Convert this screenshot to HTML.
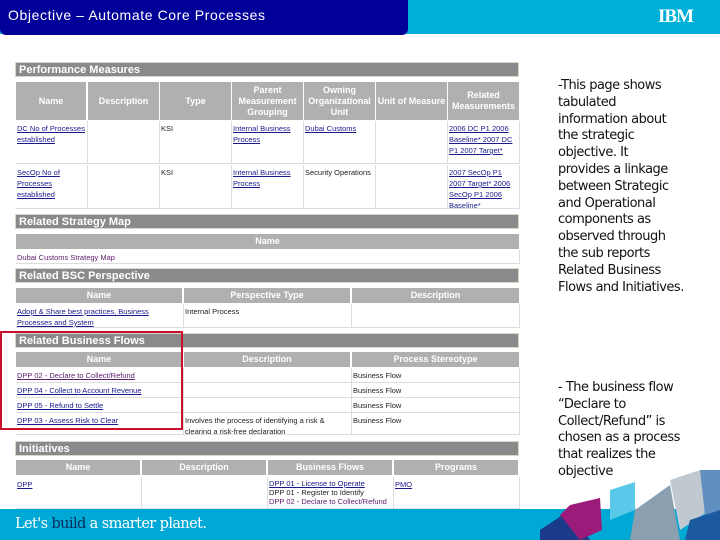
<!DOCTYPE html>
<html><head><meta charset="utf-8"><style>
*{margin:0;padding:0;box-sizing:border-box}
body{width:720px;height:540px;position:relative;overflow:hidden;background:#fff;font-family:"Liberation Sans",sans-serif}
.a{position:absolute}
.bar{position:absolute;left:15px;width:504px;height:15px;background:#8a8a8a;color:#fff;font-weight:bold;font-size:11px;line-height:15px;padding-left:3px;border:1px solid #d8d8c8}
.hd{position:absolute;background:#b0b0b0;color:#fff;font-weight:bold;font-size:9px;text-align:center;line-height:11px;display:flex;align-items:center;justify-content:center}
.c{position:absolute;font-size:7.5px;line-height:11px;color:#222;border-bottom:1px solid #ddd;border-right:1px solid #ddd;padding:2px 1px;overflow:hidden}
.l{color:#1a1a8c;text-decoration:underline}
.rt{position:absolute;left:558px;font-size:13px;line-height:16.8px;color:#111;font-family:"DejaVu Sans","Liberation Sans",sans-serif;letter-spacing:-0.5px}
</style></head><body>
<div class="a" style="left:0;top:0;width:720px;height:34px;background:#00b0d8"></div>
<div class="a" style="left:0;top:0;width:408px;height:35px;background:#000099;border-radius:0 0 6px 6px"></div>
<div class="a" style="left:8px;top:7px;color:#fff;font-size:14px;letter-spacing:0.6px">Objective – Automate Core Processes</div>
<div class="a" style="left:658px;top:6px;color:#fff;font-size:19px;font-weight:bold;letter-spacing:-1px;font-family:'Liberation Serif',serif">IBM</div>

<div class="bar" style="top:62px">Performance Measures</div>
<div class="hd" style="left:16px;top:82px;width:70px;height:38px">Name</div>
<div class="hd" style="left:88px;top:82px;width:71px;height:38px">Description</div>
<div class="hd" style="left:160px;top:82px;width:71px;height:38px">Type</div>
<div class="hd" style="left:232px;top:82px;width:71px;height:38px">Parent Measurement Grouping</div>
<div class="hd" style="left:304px;top:82px;width:71px;height:38px">Owning Organizational Unit</div>
<div class="hd" style="left:376px;top:82px;width:71px;height:38px">Unit of Measure</div>
<div class="hd" style="left:448px;top:82px;width:71px;height:38px">Related Measurements</div>
<div class="c" style="left:16px;top:121px;width:72px;height:43px"><span class="l">DC No of Processes established</span></div>
<div class="c" style="left:88px;top:121px;width:72px;height:43px"></div>
<div class="c" style="left:160px;top:121px;width:72px;height:43px">KSI</div>
<div class="c" style="left:232px;top:121px;width:72px;height:43px"><span class="l">Internal Business Process</span></div>
<div class="c" style="left:304px;top:121px;width:72px;height:43px"><span class="l">Dubai Customs</span></div>
<div class="c" style="left:376px;top:121px;width:72px;height:43px"></div>
<div class="c" style="left:448px;top:121px;width:72px;height:43px"><span class="l">2006 DC P1 2006 Baseline* 2007 DC P1 2007 Target*</span></div>
<div class="c" style="left:16px;top:165px;width:72px;height:44px"><span class="l">SecOp No of Processes established</span></div>
<div class="c" style="left:88px;top:165px;width:72px;height:44px"></div>
<div class="c" style="left:160px;top:165px;width:72px;height:44px">KSI</div>
<div class="c" style="left:232px;top:165px;width:72px;height:44px"><span class="l">Internal Business Process</span></div>
<div class="c" style="left:304px;top:165px;width:72px;height:44px">Security Operations</div>
<div class="c" style="left:376px;top:165px;width:72px;height:44px"></div>
<div class="c" style="left:448px;top:165px;width:72px;height:44px"><span class="l">2007 SecOp P1 2007 Target* 2006 SecOp P1 2006 Baseline*</span></div>

<div class="bar" style="top:214px">Related Strategy Map</div>
<div class="hd" style="left:16px;top:234px;width:503px;height:15px">Name</div>
<div class="c" style="left:16px;top:250px;width:504px;height:14px;color:#602070">Dubai Customs Strategy Map</div>

<div class="bar" style="top:268px">Related BSC Perspective</div>
<div class="hd" style="left:16px;top:288px;width:166px;height:15px">Name</div>
<div class="hd" style="left:184px;top:288px;width:166px;height:15px">Perspective Type</div>
<div class="hd" style="left:352px;top:288px;width:167px;height:15px">Description</div>
<div class="c" style="left:16px;top:304px;width:168px;height:24px"><span class="l">Adopt &amp; Share best practices, Business Processes and System</span></div>
<div class="c" style="left:184px;top:304px;width:168px;height:24px">Internal Process</div>
<div class="c" style="left:352px;top:304px;width:168px;height:24px"></div>

<div class="bar" style="top:333px">Related Business Flows</div>
<div class="hd" style="left:16px;top:352px;width:166px;height:15px">Name</div>
<div class="hd" style="left:184px;top:352px;width:166px;height:15px">Description</div>
<div class="hd" style="left:352px;top:352px;width:167px;height:15px">Process Stereotype</div>
<div class="c" style="left:16px;top:368px;width:168px;height:15px"><span class="l" style="color:#602070">DPP 02 - Declare to Collect/Refund</span></div>
<div class="c" style="left:184px;top:368px;width:168px;height:15px"></div>
<div class="c" style="left:352px;top:368px;width:168px;height:15px">Business Flow</div>
<div class="c" style="left:16px;top:383px;width:168px;height:15px"><span class="l">DPP 04 - Collect to Account Revenue</span></div>
<div class="c" style="left:184px;top:383px;width:168px;height:15px"></div>
<div class="c" style="left:352px;top:383px;width:168px;height:15px">Business Flow</div>
<div class="c" style="left:16px;top:398px;width:168px;height:15px"><span class="l">DPP 05 - Refund to Settle</span></div>
<div class="c" style="left:184px;top:398px;width:168px;height:15px"></div>
<div class="c" style="left:352px;top:398px;width:168px;height:15px">Business Flow</div>
<div class="c" style="left:16px;top:413px;width:168px;height:22px"><span class="l">DPP 03 - Assess Risk to Clear</span></div>
<div class="c" style="left:184px;top:413px;width:168px;height:22px">Involves the process of identifying a risk &amp; clearing a risk-free declaration</div>
<div class="c" style="left:352px;top:413px;width:168px;height:22px">Business Flow</div>
<div class="a" style="left:0;top:331px;width:183px;height:99px;border:2px solid #c8102e"></div>

<div class="bar" style="top:441px">Initiatives</div>
<div class="hd" style="left:16px;top:460px;width:124px;height:15px">Name</div>
<div class="hd" style="left:142px;top:460px;width:124px;height:15px">Description</div>
<div class="hd" style="left:268px;top:460px;width:124px;height:15px">Business Flows</div>
<div class="hd" style="left:394px;top:460px;width:124px;height:15px">Programs</div>
<div class="c" style="left:16px;top:477px;width:126px;height:32px"><span class="l">DPP</span></div>
<div class="c" style="left:142px;top:477px;width:126px;height:32px"></div>
<div class="c" style="left:268px;top:477px;width:126px;height:32px;line-height:9px"><span class="l">DPP 01 - License to Operate</span><br>DPP 01 - Register to Identify<br><span style="color:#602070">DPP 02 - Declare to Collect/Refund</span></div>
<div class="c" style="left:394px;top:477px;width:126px;height:32px"><span class="l">PMO</span></div>

<div class="rt" style="top:78px">-This page shows<br>tabulated<br>information about<br>the strategic<br>objective. It<br>provides a linkage<br>between Strategic<br>and Operational<br>components as<br>observed through<br>the sub reports<br>Related Business<br>Flows and Initiatives.</div>
<div class="rt" style="top:380px">- The business flow<br>“Declare to<br>Collect/Refund” is<br>chosen as a process<br>that realizes the<br>objective</div>

<div class="a" style="left:0;top:509px;width:720px;height:31px;background:#00a8d6"></div>
<svg class="a" style="left:540px;top:470px" width="180" height="70">
<polygon points="0,60 30,40 50,70 0,70" fill="#1a3a8a"/>
<polygon points="30,35 60,28 62,60 40,70 20,45" fill="#9b1b7a"/>
<polygon points="70,20 95,12 95,40 70,50" fill="#5ac8e8"/>
<polygon points="95,40 130,15 140,70 90,70" fill="#8aa0b0"/>
<polygon points="130,10 160,0 170,40 140,60" fill="#c0c8d0"/>
<polygon points="160,0 180,-5 180,50 165,45" fill="#6090c0"/>
<polygon points="150,50 180,40 180,70 145,70" fill="#1c5aa0"/>
</svg>
<div class="a" style="left:15px;top:516px;color:#fff;font-size:14.5px;font-family:'DejaVu Serif',serif;letter-spacing:-0.6px">Let's <span style="color:#062a5a">build</span> a smarter planet.</div>
</body></html>
